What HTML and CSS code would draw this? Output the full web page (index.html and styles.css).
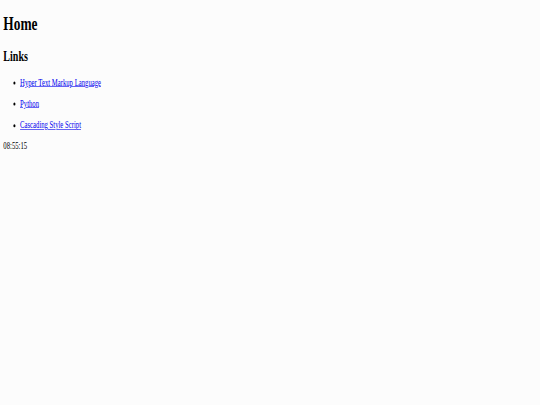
FILE: index.html
```html
<!DOCTYPE html>
<html>
<head>
<meta charset="utf-8">
<title>Home</title>
<link rel="stylesheet" href="styles.css">
</head>
<body>
<div class="page">
  <h1>Home</h1>
  <h2>Links</h2>
  <ul class="links">
    <li><p><a href="#">Hyper Text Markup Language</a></p></li>
    <li><p><a href="#">Python</a></p></li>
    <li><p><a href="#">Cascading Style Script</a></p></li>
  </ul>
  <p class="clock">08:55:15</p>
</div>
</body>
</html>
```

FILE: styles.css
```css
html {
  background: #fcfcfc;
}
body {
  margin: 0;
  width: 540px;
  height: 405px;
  overflow: hidden;
}
.page {
  display: flow-root;
  box-sizing: border-box;
  width: 1292px;
  height: 675px;
  padding: 0 8px;
  font-family: "Liberation Serif", "Times New Roman", serif;
  font-size: 16px;
  color: #000;
  transform: scale(0.418, 0.6);
  transform-origin: 0 0;
}
h2 {
  margin-bottom: 22px;
}
.links {
  margin-bottom: 0;
}
.links p {
  margin: 17.5px 0 0;
}
.links a {
  color: #0000ee;
}
.clock {
  margin-top: 16px;
}
```
